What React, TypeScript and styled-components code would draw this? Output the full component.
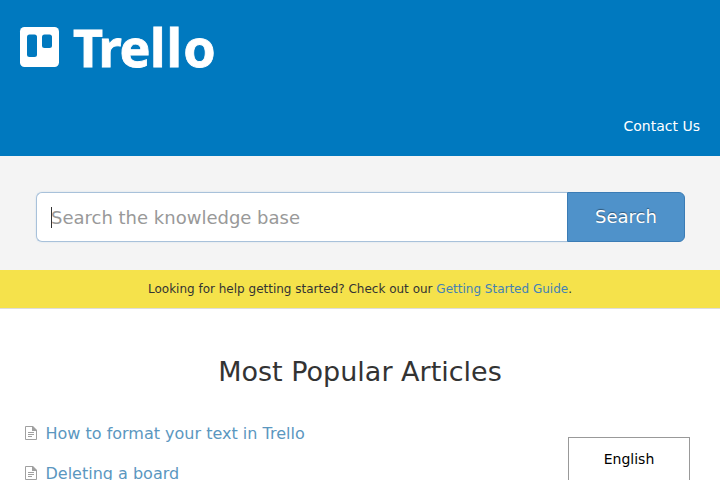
import React from "react";
import styled, { createGlobalStyle } from "styled-components";

const GlobalStyle = createGlobalStyle`
  * { box-sizing: border-box; }
  html, body { margin: 0; padding: 0; }
  body {
    height: 480px;
    overflow: hidden;
    background: #fff;
    color: #333;
    font-family: "DejaVu Sans", sans-serif;
  }
  a { text-decoration: none; }
`;

const Page = styled.div`
  position: relative;
  height: 480px;
  overflow: hidden;
`;

const Header = styled.header`
  display: flex;
  flex-direction: column;
  justify-content: space-between;
  height: 156px;
  padding: 20px 20px 20px;
  background: #0079bf;
`;

const Logo = styled.svg`
  display: block;
  width: 200px;
  height: 56px;
  overflow: visible;
`;

const Wordmark = styled.text`
  font-family: "Noto Sans", "Open Sans", sans-serif;
  font-weight: 700;
  fill: #fff;
  stroke: #fff;
  stroke-width: 0.8px;
`;

const Nav = styled.nav`
  display: flex;
  justify-content: flex-end;
`;

const NavLink = styled.a`
  color: #fff;
  font-size: 14px;
  line-height: 20px;
`;

const SearchSection = styled.section`
  height: 114px;
  padding: 36px 35px 28px 36px;
  background: #f4f4f4;
`;

const SearchForm = styled.form`
  display: flex;
  height: 50px;
`;

const Field = styled.div`
  position: relative;
  flex: 1;
`;

const SearchInput = styled.input`
  display: block;
  width: 100%;
  height: 50px;
  margin: 0;
  padding: 0 14px;
  border: 1px solid #a8c1da;
  border-right: 0;
  border-radius: 6px 0 0 6px;
  outline: none;
  background: #fff;
  box-shadow: 0 0 2px rgba(120, 170, 220, 0.25);
  font: 18px "DejaVu Sans", sans-serif;
  &::placeholder {
    color: #999;
    opacity: 1;
  }
`;

const Caret = styled.span`
  position: absolute;
  top: 15px;
  left: 15px;
  width: 1px;
  height: 21px;
  background: #333;
`;

const SearchButton = styled.button`
  position: relative;
  width: 118px;
  height: 50px;
  padding: 0 0 1px;
  border: 1px solid #3b7cb5;
  border-radius: 0 6px 6px 0;
  background: #4f92ca;
  color: #fff;
  font: 18px "DejaVu Sans", sans-serif;
  text-shadow: 0 -1px 1px rgba(0, 0, 0, 0.4);
`;

const Notice = styled.div`
  height: 39px;
  border-bottom: 1px solid #ddd;
  background: #f5e24b;
  background-clip: padding-box;
  font-size: 12px;
  line-height: 38px;
  text-align: center;
`;

const NoticeLink = styled.a`
  color: #4381b5;
`;

const Title = styled.h1`
  margin: 44px 0 0;
  font-size: 27px;
  font-weight: 400;
  line-height: 38px;
  text-align: center;
`;

const Articles = styled.ul`
  margin: 22px 0 0;
  padding: 0 25px;
  list-style: none;
`;

const Article = styled.li`
  display: flex;
  align-items: center;
  gap: 7.5px;
  height: 40px;
`;

const ArticleLink = styled.a`
  padding-top: 2px;
  color: #5b97bf;
  font-size: 16px;
  line-height: 20px;
`;

const Language = styled.div`
  position: absolute;
  left: 568px;
  top: 437px;
  width: 122px;
  height: 46px;
  border: 1px solid #999;
  background: #fff;
  color: #000;
  font-size: 14px;
  line-height: 43px;
  text-align: center;
`;

const FileIcon = () => (
  <svg width="13" height="14" viewBox="0 0 13 14" fill="none" stroke="#a0a0a0">
    <path d="M.5.5h7l4 4v9H.5z" />
    <path d="M7 0h1l4 4v1H7z" fill="#a0a0a0" stroke="none" />
    <path d="M3 6.5h6M3 8.5h6M3 10.5h4" />
  </svg>
);

const articles = ["How to format your text in Trello", "Deleting a board"];

export default function App() {
  return (
    <Page>
      <GlobalStyle />
      <Header>
        <Logo viewBox="0 0 200 56" role="img" aria-label="Trello">
          <rect y="7" width="39" height="40" rx="4.5" fill="#fff" />
          <rect x="7" y="14.5" width="10" height="22.5" rx="2.5" fill="#0079bf" />
          <rect x="22" y="14.5" width="10" height="13.5" rx="2.5" fill="#0079bf" />
          <Wordmark y="47" x="53 78.5 99.5 130 146.5 163.3" fontSize="52">Trello</Wordmark>
        </Logo>
        <Nav>
          <NavLink href="#">Contact Us</NavLink>
        </Nav>
      </Header>
      <SearchSection>
        <SearchForm>
          <Field>
            <SearchInput placeholder="Search the knowledge base" />
            <Caret />
          </Field>
          <SearchButton type="button">Search</SearchButton>
        </SearchForm>
      </SearchSection>
      <Notice>
        Looking for help getting started? Check out our{" "}
        <NoticeLink href="#">Getting Started Guide</NoticeLink>.
      </Notice>
      <Title>Most Popular Articles</Title>
      <Articles>
        {articles.map((name) => (
          <Article key={name}>
            <FileIcon />
            <ArticleLink href="#">{name}</ArticleLink>
          </Article>
        ))}
      </Articles>
      <Language>English</Language>
    </Page>
  );
}
